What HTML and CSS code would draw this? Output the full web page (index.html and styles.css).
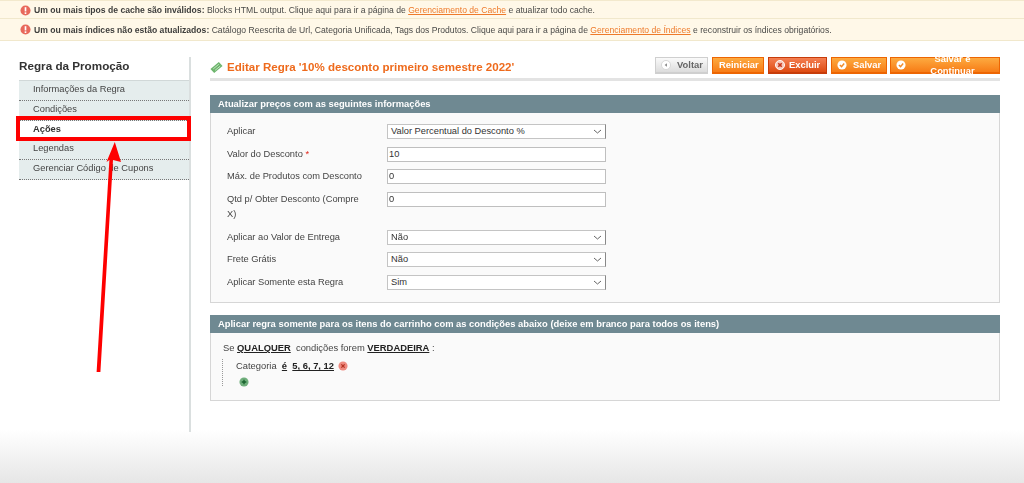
FILE: index.html
```html
<!DOCTYPE html>
<html lang="pt-BR">
<head>
<meta charset="utf-8">
<title>Editar Regra</title>
<link rel="stylesheet" href="styles.css">
</head>
<body>
<div class="notices">
  <div class="notice notice-first">
    <svg class="notice-icon" viewBox="0 0 12 12"><circle cx="6" cy="6" r="5.5" fill="#e8695c"/><rect x="5.1" y="2.4" width="1.8" height="4.6" fill="#fff"/><rect x="5.1" y="8" width="1.8" height="1.8" fill="#fff"/></svg>
    <span><b>Um ou mais tipos de cache são inválidos:</b> Blocks HTML output. Clique aqui para ir a página de <a href="#">Gerenciamento de Cache</a> e atualizar todo cache.</span>
  </div>
  <div class="notice">
    <svg class="notice-icon" viewBox="0 0 12 12"><circle cx="6" cy="6" r="5.5" fill="#e8695c"/><rect x="5.1" y="2.4" width="1.8" height="4.6" fill="#fff"/><rect x="5.1" y="8" width="1.8" height="1.8" fill="#fff"/></svg>
    <span><b>Um ou mais índices não estão atualizados:</b> Catálogo Reescrita de Url, Categoria Unificada, Tags dos Produtos. Clique aqui para ir a página de <a href="#">Gerenciamento de Índices</a> e reconstruir os índices obrigatórios.</span>
  </div>
</div>

<div class="page">
  <aside class="side">
    <h3 class="side-title">Regra da Promoção</h3>
    <ul class="tabs">
      <li>Informações da Regra</li>
      <li>Condições</li>
      <li class="active">Ações</li>
      <li>Legendas</li>
      <li>Gerenciar Código de Cupons</li>
    </ul>
  </aside>

  <main class="main">
    <div class="head">
      <h3 class="title">
        <svg class="title-icon" viewBox="0 0 14 14"><path d="M0.5 8.5 9.5 1 13.5 5.5 4.5 13Z" fill="#6db56d"/><path d="M3.5 8.5 9.5 3.5M5.5 10 11 5.5" stroke="#c9e5c5" stroke-width="1" fill="none"/></svg>
        Editar Regra '10% desconto primeiro semestre 2022'
      </h3>
      <div class="actions">
        <button class="btn btn-back"><svg class="btn-icon" viewBox="0 0 11 11"><circle cx="5.5" cy="5.5" r="5" fill="#fff" stroke="#d5d5d5"/><path d="M6.5 3.5 4 5.5 6.5 7.5Z" fill="#888"/></svg>Voltar</button>
        <button class="btn btn-plain">Reiniciar</button>
        <button class="btn btn-del"><svg class="btn-icon" viewBox="0 0 11 11"><circle cx="5.5" cy="5.5" r="5" fill="#f7c9bb" stroke="#fff"/><path d="M3.6 3.6 7.4 7.4M7.4 3.6 3.6 7.4" stroke="#c9361a" stroke-width="1.8"/></svg>Excluir</button>
        <button class="btn btn-save"><svg class="btn-icon" viewBox="0 0 11 11"><circle cx="5.5" cy="5.5" r="5" fill="#fff"/><path d="M3.2 5.6 5 7.3 7.9 3.9" stroke="#f18a2a" stroke-width="1.6" fill="none"/></svg>Salvar</button>
        <button class="btn btn-save btn-last"><svg class="btn-icon" viewBox="0 0 11 11"><circle cx="5.5" cy="5.5" r="5" fill="#fff"/><path d="M3.2 5.6 5 7.3 7.9 3.9" stroke="#f18a2a" stroke-width="1.6" fill="none"/></svg>Salvar e Continuar</button>
      </div>
    </div>

    <section class="box">
      <h4 class="box-head">Atualizar preços com as seguintes informações</h4>
      <div class="box-body form-body">
        <div class="row"><label>Aplicar</label><div class="field fake-select">Valor Percentual do Desconto %<svg class="chev" viewBox="0 0 9 5"><path d="M1 1 4.5 4 8 1" stroke="#666" fill="none"/></svg></div></div>
        <div class="row"><label>Valor do Desconto <em>*</em></label><div class="field fake-input">10</div></div>
        <div class="row"><label>Máx. de Produtos com Desconto</label><div class="field fake-input">0</div></div>
        <div class="row row-tall"><label>Qtd p/ Obter Desconto (Compre X)</label><div class="field fake-input">0</div></div>
        <div class="row"><label>Aplicar ao Valor de Entrega</label><div class="field fake-select">Não<svg class="chev" viewBox="0 0 9 5"><path d="M1 1 4.5 4 8 1" stroke="#666" fill="none"/></svg></div></div>
        <div class="row"><label>Frete Grátis</label><div class="field fake-select">Não<svg class="chev" viewBox="0 0 9 5"><path d="M1 1 4.5 4 8 1" stroke="#666" fill="none"/></svg></div></div>
        <div class="row"><label>Aplicar Somente esta Regra</label><div class="field fake-select">Sim<svg class="chev" viewBox="0 0 9 5"><path d="M1 1 4.5 4 8 1" stroke="#666" fill="none"/></svg></div></div>
      </div>
    </section>

    <section class="box">
      <h4 class="box-head">Aplicar regra somente para os itens do carrinho com as condições abaixo (deixe em branco para todos os itens)</h4>
      <div class="box-body cond-body">
        <p class="cond-line">Se <a class="rule" href="#">QUALQUER</a>&nbsp; condições forem <a class="rule" href="#">VERDADEIRA</a> :</p>
        <div class="cond-list">
          <p class="cond-item">Categoria&nbsp; <a class="rule" href="#">é</a>&nbsp; <a class="rule" href="#">5, 6, 7, 12</a><svg class="small-icon" viewBox="0 0 11 11"><circle cx="5.5" cy="5.5" r="5" fill="#ee8a80"/><path d="M3.7 3.7 7.3 7.3M7.3 3.7 3.7 7.3" stroke="#b5301f" stroke-width="1.4"/></svg></p>
          <p class="cond-add"><svg class="small-icon" viewBox="0 0 11 11"><circle cx="5.5" cy="5.5" r="5" fill="#6fae7b"/><path d="M5.5 3V8M3 5.5H8" stroke="#17602c" stroke-width="1.5"/></svg></p>
        </div>
      </div>
    </section>
  </main>
</div>

<div class="foot"></div>

<div class="callout-box"></div>
<svg class="callout-arrow" viewBox="0 0 1024 483"><path d="M96.6 372 L100.4 372 L113 160 L121 162 L114.8 142 L106.5 162 L109.4 160 Z" fill="#fe0000"/></svg>
</body>
</html>
```
FILE: styles.css
```css
* { box-sizing: border-box; }
html, body { margin: 0; padding: 0; }
body {
  width: 1024px;
  height: 483px;
  overflow: hidden;
  position: relative;
  background: #fff;
  font: 9.3px/12px "Liberation Sans", Arial, sans-serif;
  color: #444;
  filter: blur(0.35px);
}
.notices { height: 41px; }
.notice {
  display: flex;
  align-items: center;
  gap: 3px;
  height: 22px;
  padding: 0 0 0 20px;
  background: #fff8e8;
  border-bottom: 1px solid #f1e8cc;
  font-size: 8.6px;
  color: #4a4a48;
}
.notice-first { height: 19px; border-top: 1px solid #f3e9cd; padding-top: 1px; }
.notice b { color: #3e3e3c; }
.notice a { color: #ee7a2a; }
.notice-icon { width: 11px; height: 11px; flex: none; }

.page { display: flex; height: 391px; padding: 16px 24px 0 19px; }
.side { width: 172px; flex: none; border-right: 2px solid #dadfdf; }
.side-title { margin: 0; height: 23px; padding-top: 2px; font-size: 11.7px; line-height: 14px; font-weight: bold; color: #333; }
.tabs { list-style: none; margin: 0; padding: 0; width: 170px; border-top: 1px solid #d1d8d8; }
.tabs li {
  height: 19.8px;
  padding: 2px 0 0 14px;
  background: #e5eded;
  border-bottom: 1px dotted #777;
  color: #444;
  font-size: 9.3px;
}
.tabs li.active { background: #fff; font-weight: bold; color: #333; border-bottom: 0; }

.main { flex: 1; margin-left: 19px; min-width: 0; }
.head {
  display: flex;
  justify-content: space-between;
  align-items: flex-start;
  height: 24px;
  margin-bottom: 14px;
  border-bottom: 3px solid #e3e3e3;
}
.title {
  display: flex;
  align-items: center;
  gap: 4px;
  margin: 2px 0 0;
  color: #ee6a1c;
  font-size: 11.55px;
  line-height: 16px;
  font-weight: bold;
}
.title-icon { width: 13px; height: 13px; flex: none; }
.actions { display: flex; gap: 4px; }
.btn {
  display: flex;
  align-items: center;
  gap: 6px;
  height: 17px;
  padding: 0 6px 1px 5px;
  border: 1px solid #ed6502;
  border-width: 1px 1px 2px;
  background: linear-gradient(#fdaa40, #f77c16);
  color: #fff;
  font: bold 9.4px/12px "Liberation Sans", Arial, sans-serif;
}
.btn-back { background: linear-gradient(#fafafa, #dcdcdc); border-color: #cfcfcf; color: #666; width: 53px; }
.btn-plain { width: 52px; padding-left: 6px; }
.btn-del { background: linear-gradient(#f47f52, #de4b12); border-color: #c73c0a; gap: 4px; width: 59px; padding-left: 6px; }
.btn-save { width: 56px; }
.btn-last { width: 110px; margin-left: -1px; }
.btn-icon { width: 10px; height: 10px; flex: none; }

.box { margin-bottom: 12px; }
.box-head {
  margin: 0;
  height: 18px;
  padding: 2px 0 0 8px;
  background: #6f8992;
  color: #fff;
  font-size: 9.4px;
  line-height: 13px;
  font-weight: bold;
}
.box-body { background: #fafafa; border: 1px solid #d6d6d6; border-top: 0; }
.form-body { height: 190px; padding: 11px 0 0 16px; }
.row { display: flex; height: 22.6px; align-items: flex-start; }
.row-tall { height: 38px; }
.row label { width: 160px; flex: none; padding-top: 0; padding-right: 20px; font-size: 9.3px; line-height: 15px; color: #444; }
.row em { color: #e0261b; font-style: normal; }
.field {
  position: relative;
  width: 219px;
  height: 15px;
  padding: 0 0 0 1px;
  background: #fff;
  border: 1px solid #bfbfbf;
  font-size: 9.3px;
  line-height: 13px;
  color: #333;
}
.fake-select { padding-left: 3px; border-color: #c4c4c4 #888 #c4c4c4 #c4c4c4; }
.chev { position: absolute; right: 3px; top: 4px; width: 9px; height: 5px; }

.cond-body { height: 68px; padding: 8px 0 0 12px; }
.cond-body p { margin: 0; }
.cond-line, .cond-item { font-size: 9.4px; line-height: 13px; color: #444; }
.rule { color: #222; font-weight: bold; }
.cond-list { margin-top: 5px; margin-left: -1px; padding-left: 13px; border-left: 1px dotted #999; height: 27px; width: 200px; }
.cond-item { display: flex; align-items: center; white-space: pre; }
.small-icon { width: 10px; height: 10px; flex: none; margin-left: 4px; }
.cond-add { margin-top: 5px !important; height: 10px; line-height: 0; margin-left: -1px !important; }

.foot {
  position: absolute;
  left: 0; right: 0; bottom: 0;
  height: 53px;
  background: linear-gradient(#fff, #e6e6e6);
  z-index: -1;
}
.callout-box {
  position: absolute;
  left: 16px; top: 116px;
  width: 175px; height: 25px;
  border: 4px solid #fe0000;
}
.callout-arrow { position: absolute; left: 0; top: 0; width: 1024px; height: 483px; pointer-events: none; }
```
